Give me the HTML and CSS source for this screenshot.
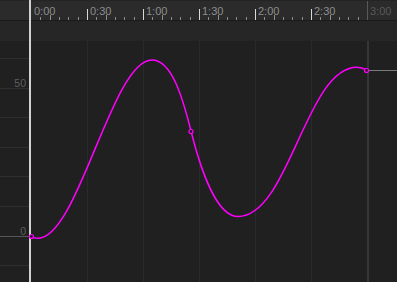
FILE: index.html
```html
<!DOCTYPE html>
<html>
<head>
    <title>Curve Editor</title>
    <link rel="stylesheet" href="styles.css">
</head>
<body>
    <div class="timeline">
        <!-- time ruler -->
        <div class="ruler">
            <div class="seg first"><span>0:00</span></div>
            <div class="seg"><span>0:30</span></div>
            <div class="seg"><span>1:00</span></div>
            <div class="seg"><span>1:30</span></div>
            <div class="seg"><span>2:00</span></div>
            <div class="seg"><span>2:30</span></div>
            <div class="seg end"><span>3:00</span></div>
        </div>
        <div class="band"></div>

        <!-- value grid -->
        <div class="graph">
            <div class="axis">
                <div class="row top"></div>
                <div class="row"><span>50</span></div>
                <div class="row"></div>
                <div class="row"></div>
                <div class="row"></div>
                <div class="row"></div>
                <div class="row zero"><span>0</span></div>
                <div class="row"></div>
            </div>
            <div class="cols">
                <div class="col"></div>
                <div class="col"></div>
                <div class="col"></div>
                <div class="col"></div>
                <div class="col"></div>
                <div class="col"></div>
                <div class="col end"></div>
            </div>
        </div>

        <div class="playhead"></div>

        <!-- animation curve -->
        <svg class="curve" width="397" height="282" viewBox="0 0 397 282">
            <line x1="369" y1="70.5" x2="397" y2="70.5" class="hold"/>
            <path class="path" d="M31.3,236.5 C33,237.8 35,238.3 38,238.3 C78,238.3 112,60 152,60 C172,60 183,99 191,131 C202,175 218,216.5 238,216.5 C289,216.5 306,67.3 357,67.3 C361,67.3 364,68.5 366.7,70"/>
            <circle class="key" cx="31.5" cy="236.5" r="2"/>
            <circle class="key" cx="191" cy="131.5" r="2"/>
            <circle class="key" cx="366.5" cy="70.5" r="2"/>
        </svg>
    </div>
</body>
</html>
```

FILE: styles.css
```css
body {
    margin: 0;
    background-color: #202020;
    font-family: "Liberation Sans", Arial, sans-serif;
}
.timeline {
    position: relative;
    width: 397px;
    height: 282px;
    overflow: hidden;
}
.ruler {
    display: flex;
    box-sizing: border-box;
    height: 21px;
    padding-left: 31px;
    background-color: #2b2b2b;
    border-top: 1px solid #242424;
    border-bottom: 1px solid #1a1a1a;
}
.seg {
    --major: #d9d9d9;
    flex: 0 0 56px;
    box-sizing: border-box;
    padding: 5px 0 0 3px;
    font-size: 11px;
    line-height: 11px;
    color: #8d8d8d;
    background-image:
        linear-gradient(var(--major), var(--major)),
        linear-gradient(#8e8e8e, #8e8e8e),
        linear-gradient(#8e8e8e, #8e8e8e),
        linear-gradient(#8e8e8e, #8e8e8e),
        linear-gradient(#8e8e8e, #8e8e8e),
        linear-gradient(#8e8e8e, #8e8e8e);
    background-position: 0 8px, 9px 16px, 19px 14px, 28px 16px, 37px 16px, 47px 16px;
    background-size: 1px 11px, 1px 3px, 1px 5px, 1px 3px, 1px 3px, 1px 3px;
    background-repeat: no-repeat;
}
.seg.first {
    --major: transparent;
}
.seg.end {
    flex: 1;
    color: #595959;
    background: linear-gradient(#5a5a5a, #5a5a5a) 0 0 / 1px 100% no-repeat;
}
.band {
    height: 20px;
    background-color: #262626;
}
.graph {
    display: flex;
    height: 241px;
    background-color: #202020;
}
.axis {
    flex: 0 0 29px;
    display: flex;
    flex-direction: column;
}
.row {
    display: flex;
    align-items: flex-end;
    justify-content: flex-end;
    box-sizing: border-box;
    height: 29.6px;
    flex: none;
    padding-right: 3px;
    border-bottom: 1px solid #2f2f2f;
    font-size: 10.5px;
    line-height: 9px;
    color: #5e5e5e;
}
.row.top {
    height: 18px;
}
.row.zero {
    border-bottom-color: #565656;
}
.cols {
    display: flex;
    flex: 1;
    margin-left: 2px;
}
.col {
    flex: 0 0 56px;
    box-sizing: border-box;
    border-left: 1px solid #2a2a2a;
}
.col:first-child {
    border-left: none;
}
.col.end {
    flex: 1;
    border-left: 2px solid #363636;
}
.playhead {
    position: absolute;
    top: 0;
    left: 29px;
    width: 2px;
    height: 100%;
    background-color: #d2d2d2;
}
.curve {
    position: absolute;
    top: 0;
    left: 0;
}
.path {
    fill: none;
    stroke: #ff00ff;
    stroke-width: 1.5;
}
.hold {
    stroke: #7a7a7a;
    stroke-width: 1;
}
.key {
    fill: #2a0a2a;
    stroke: #ff00ff;
    stroke-width: 1.2;
}
```
